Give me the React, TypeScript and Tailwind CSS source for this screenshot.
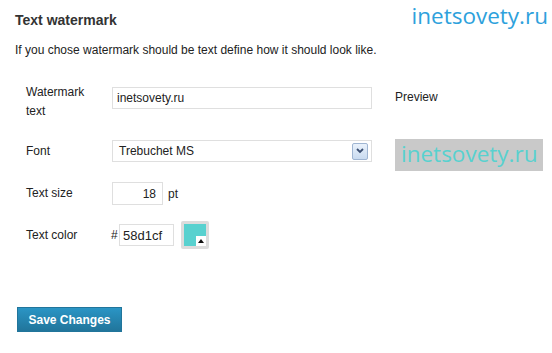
import { FC } from 'react';

// --- Small form pieces ---
const Label: FC<{ children: React.ReactNode; className?: string }> = ({ children, className = '' }) => (
  <div className={`w-[86px] shrink-0 leading-[19px] text-[#222] ${className}`}>{children}</div>
);

const ColorSwatch: FC = () => (
  <div className="ml-[7px] w-[28px] h-[28px] bg-[#dcdcdc] rounded-[2px] p-[3px]">
    <div className="relative w-full h-full bg-[#58d1cf]">
      <div className="absolute right-0 bottom-0 w-[10px] h-[10px] bg-white flex items-center justify-center">
        <svg width="6" height="4" viewBox="0 0 6 4">
          <path d="M0 4 L3 0 L6 4 Z" fill="#111" />
        </svg>
      </div>
    </div>
  </div>
);

const App: FC = () => {
  return (
    <div className="w-[552px] h-[353px] bg-white text-[#333] text-[12px] font-['Liberation_Sans',Arial,sans-serif]">
      {/* header */}
      <div className="flex justify-between items-start pl-[15px] pr-[4px]">
        <h3 className="mt-[11px] text-[14px] leading-[18px] font-bold text-[#333]">Text watermark</h3>
        <div className="text-[22.5px] leading-[31px] text-[#2ea1dc] font-['Open_Sans',sans-serif] whitespace-nowrap">
          inetsovety.ru
        </div>
      </div>
      <p className="mt-[11px] ml-[15px] leading-[16px] text-[#222]">
        If you chose watermark should be text define how it should look like.
      </p>

      {/* form */}
      <div className="flex mt-[29px] ml-[26px]">
        <div className="w-[346px] shrink-0">
          <div className="flex items-start h-[53px]">
            <Label className="-mt-[4px]">
              Watermark
              <br />
              text
            </Label>
            <input
              readOnly
              value="inetsovety.ru"
              className="w-[260px] h-[22px] border border-[#dfdfdf] bg-white pl-[4px] text-[12px] text-[#222] outline-none font-['Liberation_Sans',Arial,sans-serif]"
            />
          </div>

          <div className="flex items-center h-[22px]">
            <Label>Font</Label>
            <div className="w-[260px] h-[22px] border border-[#dfdfdf] bg-white flex items-center justify-between pl-[6px] pr-[3px]">
              <span className="text-[#222]">Trebuchet MS</span>
              <div className="w-[16px] h-[17px] border border-[#9fb5d2] rounded-[2px] bg-gradient-to-b from-[#e9f1fb] to-[#c9dbf0] flex items-center justify-center">
                <svg width="8" height="6" viewBox="0 0 8 6">
                  <path d="M1 1 L4 4 L7 1" stroke="#3b4f72" strokeWidth="1.8" fill="none" />
                </svg>
              </div>
            </div>
          </div>

          <div className="flex items-center h-[23px] mt-[20px]">
            <Label>Text size</Label>
            <input
              readOnly
              value="18"
              className="w-[51px] h-[23px] border border-[#dfdfdf] bg-white pr-[6px] text-right text-[12px] text-[#222] outline-none font-['Liberation_Sans',Arial,sans-serif]"
            />
            <span className="ml-[5px] text-[#222]">pt</span>
          </div>

          <div className="flex items-center h-[28px] mt-[16px]">
            <Label>Text color</Label>
            <span className="w-[7px] text-[#222] -ml-[1px]">#</span>
            <input
              readOnly
              value="58d1cf"
              className="ml-[1px] w-[55px] h-[22px] border border-[#dfdfdf] bg-white pl-[3px] text-[13px] text-[#222] outline-none font-['Liberation_Sans',Arial,sans-serif]"
            />
            <ColorSwatch />
          </div>
        </div>

        {/* preview */}
        <div className="ml-[23px]">
          <div className="mt-[2px] leading-[16px] text-[#222]">Preview</div>
          <div className="mt-[34px] w-[148px] h-[32px] bg-[#c9c9c9] pl-[6px] text-[22.5px] leading-[29px] text-[#58d1cf] font-['Open_Sans',sans-serif] whitespace-nowrap">
            inetsovety.ru
          </div>
        </div>
      </div>

      {/* submit */}
      <button className="mt-[58px] ml-[17px] w-[105px] h-[25px] border border-[#21759b] bg-gradient-to-b from-[#2a95c5] to-[#21759b] text-white font-bold text-[12px] font-['Liberation_Sans',Arial,sans-serif]">
        Save Changes
      </button>
    </div>
  );
};

export default App;
